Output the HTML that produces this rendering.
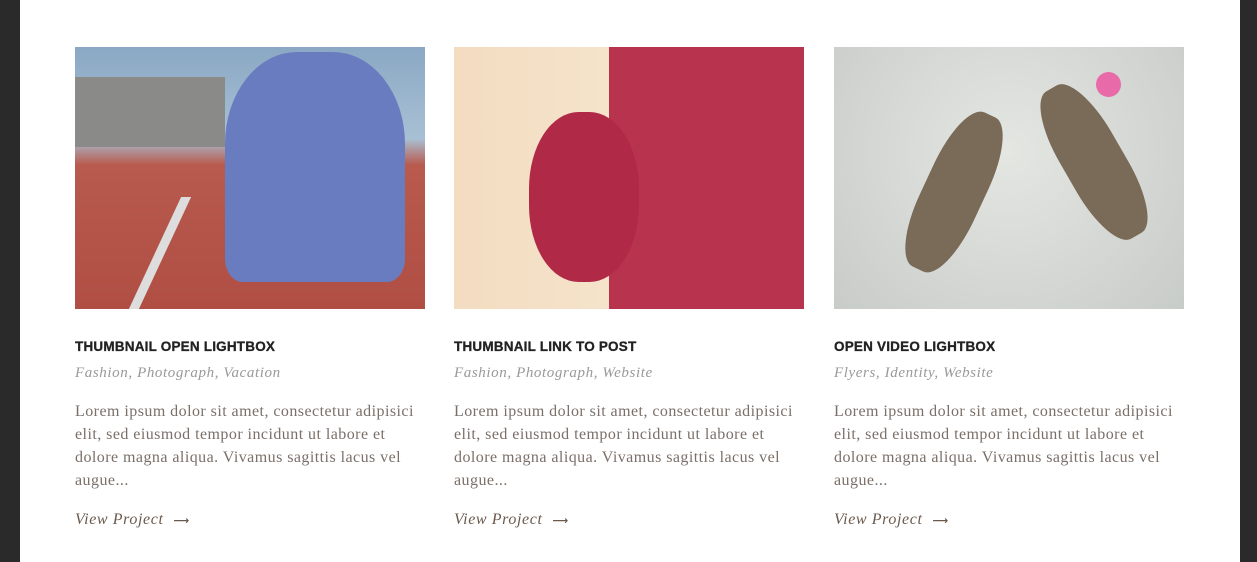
<!DOCTYPE html>
<html><head><style>
body{margin:0;width:1257px;height:562px;background:#2a2a2a;overflow:hidden;font-family:"Liberation Serif",serif}
.wrap{position:absolute;left:20px;top:0;width:1220px;height:562px;background:#fff}
.card{position:absolute;top:47px;width:350px}
.img{height:262px;width:350px;position:relative;overflow:hidden}
h3{font-family:"Liberation Sans",sans-serif;font-weight:bold;font-size:13.5px;color:#222;margin:28px 0 0;letter-spacing:0.2px;line-height:20px;-webkit-text-stroke:0.3px #222}
.cat{font-style:italic;color:#999;font-size:15px;margin-top:6px;letter-spacing:0.6px;line-height:20px}
p{color:#7b6f68;font-size:16px;line-height:23px;margin:17px 0 0;letter-spacing:0.45px;width:352px}
.vp{font-style:italic;color:#6b5a4c;font-size:16px;margin-top:18px;letter-spacing:0.6px;line-height:20px}
.vp span{font-style:normal;font-weight:bold;margin-left:10px;font-family:"DejaVu Sans",sans-serif;font-size:11px}
</style></head><body>
<div class="wrap"></div>
<div class="card" style="left:75px">
<div class="img" style="background:linear-gradient(#8aa8c4 0,#a8c0d4 35%,#b85a4e 45%,#b04e44 100%)">
<div style="position:absolute;left:0;top:30px;width:150px;height:70px;background:#8a8a88"></div>
<div style="position:absolute;left:150px;top:5px;width:180px;height:230px;background:#6a7cc0;border-radius:40% 40% 10% 10%"></div>
<div style="position:absolute;left:80px;top:150px;width:10px;height:112px;background:#ddd;transform:skewX(-25deg)"></div>
</div>
<h3>THUMBNAIL OPEN LIGHTBOX</h3>
<div class="cat">Fashion, Photograph, Vacation</div>
<p>Lorem ipsum dolor sit amet, consectetur adipisici elit, sed eiusmod tempor incidunt ut labore et dolore magna aliqua. Vivamus sagittis lacus vel augue...</p>
<div class="vp">View Project<span>⟶</span></div>
</div>
<div class="card" style="left:454px">
<div class="img" style="background:linear-gradient(90deg,#f3dcc0,#f5e4cc 50%,#f0d8bc)">
<div style="position:absolute;left:155px;top:0;width:195px;height:262px;background:#b8344e"></div>
<div style="position:absolute;left:75px;top:65px;width:110px;height:170px;background:#b02a48;border-radius:45%"></div>
</div>
<h3>THUMBNAIL LINK TO POST</h3>
<div class="cat">Fashion, Photograph, Website</div>
<p>Lorem ipsum dolor sit amet, consectetur adipisici elit, sed eiusmod tempor incidunt ut labore et dolore magna aliqua. Vivamus sagittis lacus vel augue...</p>
<div class="vp">View Project<span>⟶</span></div>
</div>
<div class="card" style="left:834px">
<div class="img" style="background:radial-gradient(circle at 50% 40%,#e4e6e2,#c8ccc8)">
<div style="position:absolute;left:90px;top:60px;width:60px;height:170px;background:#7a6a58;border-radius:40%;transform:rotate(25deg)"></div>
<div style="position:absolute;left:230px;top:30px;width:60px;height:170px;background:#7a6a58;border-radius:40%;transform:rotate(-30deg)"></div>
<div style="position:absolute;left:262px;top:25px;width:25px;height:25px;background:#e86aa8;border-radius:50%"></div>
</div>
<h3>OPEN VIDEO LIGHTBOX</h3>
<div class="cat">Flyers, Identity, Website</div>
<p>Lorem ipsum dolor sit amet, consectetur adipisici elit, sed eiusmod tempor incidunt ut labore et dolore magna aliqua. Vivamus sagittis lacus vel augue...</p>
<div class="vp">View Project<span>⟶</span></div>
</div>
</body></html>
